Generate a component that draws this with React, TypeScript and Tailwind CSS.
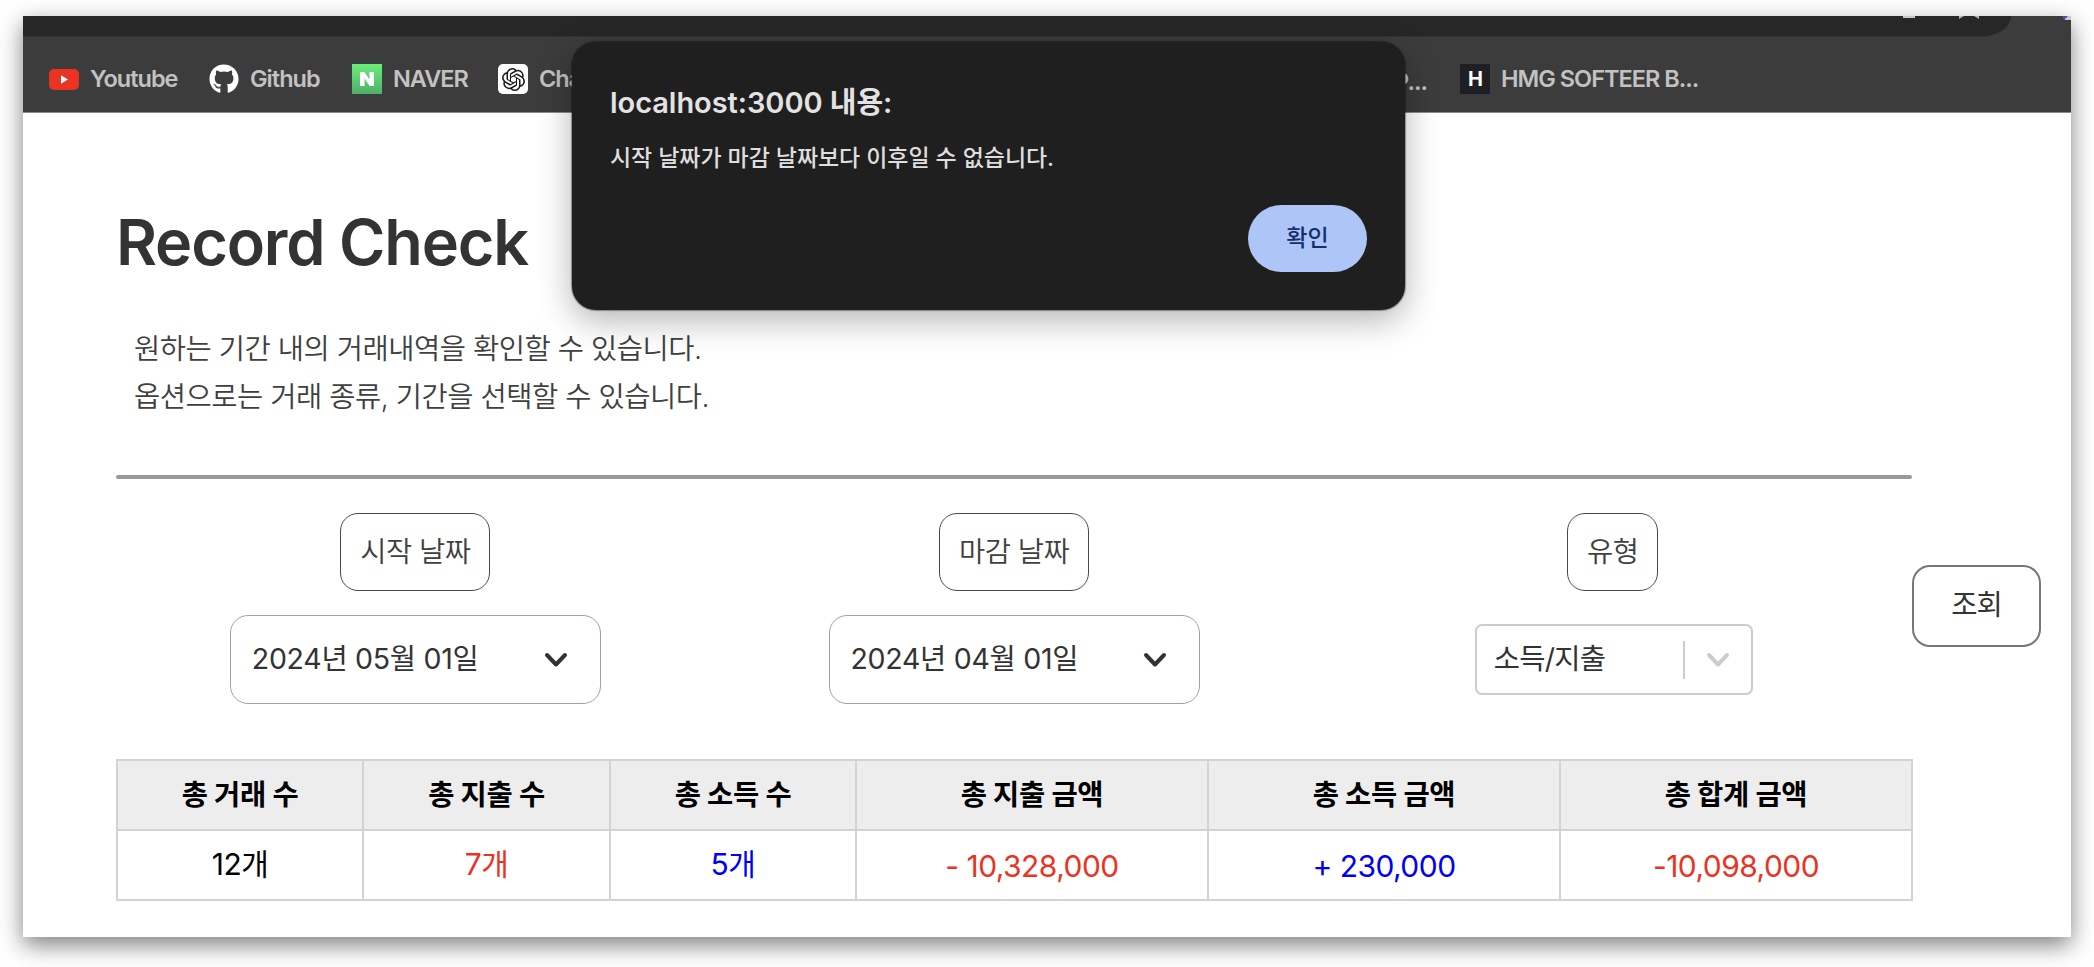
import type { ReactNode } from "react";
import { FaGithub } from "react-icons/fa";
import { SiNaver, SiOpenai } from "react-icons/si";

function Bookmark({ icon, label, className = "" }: { icon: ReactNode; label: string; className?: string }) {
  return (
    <div className={`flex h-[30px] shrink-0 items-center gap-[11px] ${className}`}>
      <span className="flex h-[30px] w-[30px] shrink-0 items-center justify-center">{icon}</span>
      <span className="whitespace-nowrap">{label}</span>
    </div>
  );
}

function BrowserBar() {
  return (
    <header className="flex h-[97px] shrink-0 flex-col border-b border-[#8c8c8c] bg-[#3c3c3c]">
      <div className="flex h-[21px] justify-between">
        <div className="flex h-[21px] w-[1988px] items-start justify-end overflow-hidden rounded-br-[30px_21px] border-b border-[#333333] bg-[#272727] pr-8">
          <span className="mr-11 h-[2px] w-3 bg-[#c7c7c7]" />
          <svg width="20" height="3" viewBox="0 0 20 3" fill="#b5b5b5">
            <path d="M0 0h5L0 3zM15 0h5v3z" />
          </svg>
        </div>
        <svg width="8" height="4" viewBox="0 0 8 4">
          <path d="M0 0h8v4H2z" fill="#c9c9c9" />
          <path d="M0 0h5L1 4z" fill="#3f51c9" />
        </svg>
      </div>
      <nav className="mt-[27px] flex pl-[26px] text-[23.5px] font-semibold tracking-[-0.042em] text-[#c2c2c2]">
        <Bookmark
          className="w-[160px]"
          label="Youtube"
          icon={
            <svg width="30" height="21" viewBox="0 0 30 21">
              <rect width="30" height="21" rx="5" fill="#ea3323" />
              <path d="M12 6.3v8.4l7-4.2z" fill="#fff" />
            </svg>
          }
        />
        <Bookmark className="w-[143px]" label="Github" icon={<FaGithub size={30} color="#fff" />} />
        <Bookmark
          className="w-[146px]"
          label="NAVER"
          icon={
            <span className="flex h-[30px] w-[30px] items-center justify-center bg-gradient-to-b from-[#6aee78] to-[#50b069] text-white">
              <SiNaver size={14} />
            </span>
          }
        />
        <Bookmark
          className="w-[896px]"
          label="ChatGPT"
          icon={
            <span className="flex h-[30px] w-[30px] items-center justify-center rounded-[5px] bg-white text-[#1c1c1c]">
              <SiOpenai size={23} />
            </span>
          }
        />
        <div className="flex w-[66px] shrink-0 items-center justify-start">P...</div>
        <Bookmark
          label="HMG SOFTEER B..."
          icon={
            <span className="flex h-[30px] w-[30px] items-center justify-center bg-[#1d1f24] text-[20px] font-bold text-white">H</span>
          }
        />
      </nav>
    </header>
  );
}

function AlertDialog() {
  return (
    <div
      role="alertdialog"
      className="absolute top-[26px] left-[549px] flex h-[268px] w-[833px] flex-col rounded-[24px] bg-[#1f1f1f] px-[38px] pt-[41px] shadow-[0_0_1px_1px_rgba(0,0,0,0.35),0_10px_34px_rgba(0,0,0,0.3)]"
    >
      <h2 className="text-[29px] leading-[40px] font-semibold tracking-[-0.002em] text-[#e3e3e3]">localhost:3000 내용:</h2>
      <p className="mt-[19px] text-[23px] leading-[32px] font-medium tracking-[-0.003em] text-[#dedede]">
        시작 날짜가 마감 날짜보다 이후일 수 없습니다.
      </p>
      <button className="mt-[31px] flex h-[67px] w-[119px] items-center justify-center self-end rounded-full bg-[#adc6f7] text-[23px] font-medium text-[#12306f]">
        확인
      </button>
    </div>
  );
}

function Chip({ children }: { children: ReactNode }) {
  return (
    <div className="flex h-[78px] items-center rounded-[18px] border border-[#4a4a4a] px-[19px] text-[28.5px] font-[350] tracking-[-0.02em] text-[#404040]">
      {children}
    </div>
  );
}

function Chevron({ color }: { color: string }) {
  return (
    <svg width="24" height="16" viewBox="0 0 24 16" fill="none" stroke={color} strokeWidth="4" strokeLinecap="round" strokeLinejoin="round">
      <path d="M3 3l9 9.500 9-9.500" />
    </svg>
  );
}

function DateFilter({ label, value }: { label: string; value: string }) {
  return (
    <div className="flex flex-1 flex-col items-center">
      <Chip>{label}</Chip>
      <div className="mt-6 flex h-[89px] w-[371px] items-center justify-between rounded-[18px] border border-[#a0a0a0] pr-[32px] pl-[21px] text-[28.5px] tracking-[-0.01em] text-[#333]">
        <span>{value}</span>
        <Chevron color="#333" />
      </div>
    </div>
  );
}

function Filters() {
  return (
    <section className="mt-[34px] flex h-[191px] text-[#333]">
      <div className="flex w-[1796px] shrink-0">
        <DateFilter label="시작 날짜" value="2024년 05월 01일" />
        <DateFilter label="마감 날짜" value="2024년 04월 01일" />
        <div className="flex flex-1 flex-col items-center">
          <Chip>유형</Chip>
          <div className="mt-[33px] ml-0.5 flex h-[71px] w-[278px] items-center rounded-[7px] border-2 border-[#ccc] pl-[17px] text-[28.5px] tracking-[-0.025em]">
            <span className="flex-1">소득/지출</span>
            <span className="h-[38px] w-[2px] bg-[#ccc]" />
            <span className="flex w-[66px] justify-center">
              <Chevron color="#ccc" />
            </span>
          </div>
        </div>
      </div>
      <button className="mt-[52px] flex h-[82px] w-[129px] shrink-0 items-center justify-center rounded-[18px] border-2 border-[#777] pb-0.5 text-[28.5px] tracking-[-0.03em]">
        조회
      </button>
    </section>
  );
}

const columns = [
  { title: "총 거래 수", value: "12개", width: "w-[246px]", style: "pb-0.5 text-black" },
  { title: "총 지출 수", value: "7개", width: "w-[247px]", style: "pb-0.5 text-[#ea3323]" },
  { title: "총 소득 수", value: "5개", width: "w-[246px]", style: "pb-0.5 text-[#0000f5]" },
  { title: "총 지출 금액", value: "- 10,328,000", width: "w-[352px]", style: "pt-0.5 text-[#ea3323]" },
  { title: "총 소득 금액", value: "+ 230,000", width: "w-[352px]", style: "pt-0.5 text-[#0000f5]" },
  { title: "총 합계 금액", value: "-10,098,000", width: "w-[352px]", style: "pt-0.5 text-[#ea3323]" },
];

function SummaryTable() {
  return (
    <table className="mt-[55px] w-[1795px] table-fixed border-collapse text-center">
      <thead>
        <tr className="h-[70px] bg-[#ededed] text-[28.5px] tracking-[-0.01em]">
          {columns.map((c) => (
            <th key={c.title} className={`border-2 border-[#d3d3d3] font-bold text-black ${c.width}`}>
              {c.title}
            </th>
          ))}
        </tr>
      </thead>
      <tbody>
        <tr className="h-[70px] text-[30px] tracking-[-0.018em]">
          {columns.map((c) => (
            <td key={c.title} className={`border-2 border-[#d3d3d3] ${c.style}`}>
              {c.value}
            </td>
          ))}
        </tr>
      </tbody>
    </table>
  );
}

export default function App() {
  return (
    <div className="h-[967px] w-[2094px] overflow-hidden bg-white px-[23px] pt-4 font-['Inter','Noto_Sans_CJK_KR',sans-serif]">
      <div className="relative flex h-[921px] w-[2048px] flex-col bg-white shadow-[0_8px_22px_rgba(0,0,0,0.5)]">
        <BrowserBar />
        <main className="flex flex-col pl-[93px]">
          <h1 className="mt-[89px] text-[63px] leading-[80px] font-semibold tracking-[-0.019em] text-[#333]">Record Check</h1>
          <p className="mt-[43px] pl-[18px] text-[28.5px] leading-[47.5px] font-[350] tracking-[-0.017em] text-[#404040]">
            원하는 기간 내의 거래내역을 확인할 수 있습니다.
            <br />
            옵션으로는 거래 종류, 기간을 선택할 수 있습니다.
          </p>
          <hr className="mt-[55px] h-1 w-[1796px] rounded-full border-0 bg-[#9a9a9a]" />
          <Filters />
          <SummaryTable />
        </main>
        <AlertDialog />
      </div>
    </div>
  );
}
